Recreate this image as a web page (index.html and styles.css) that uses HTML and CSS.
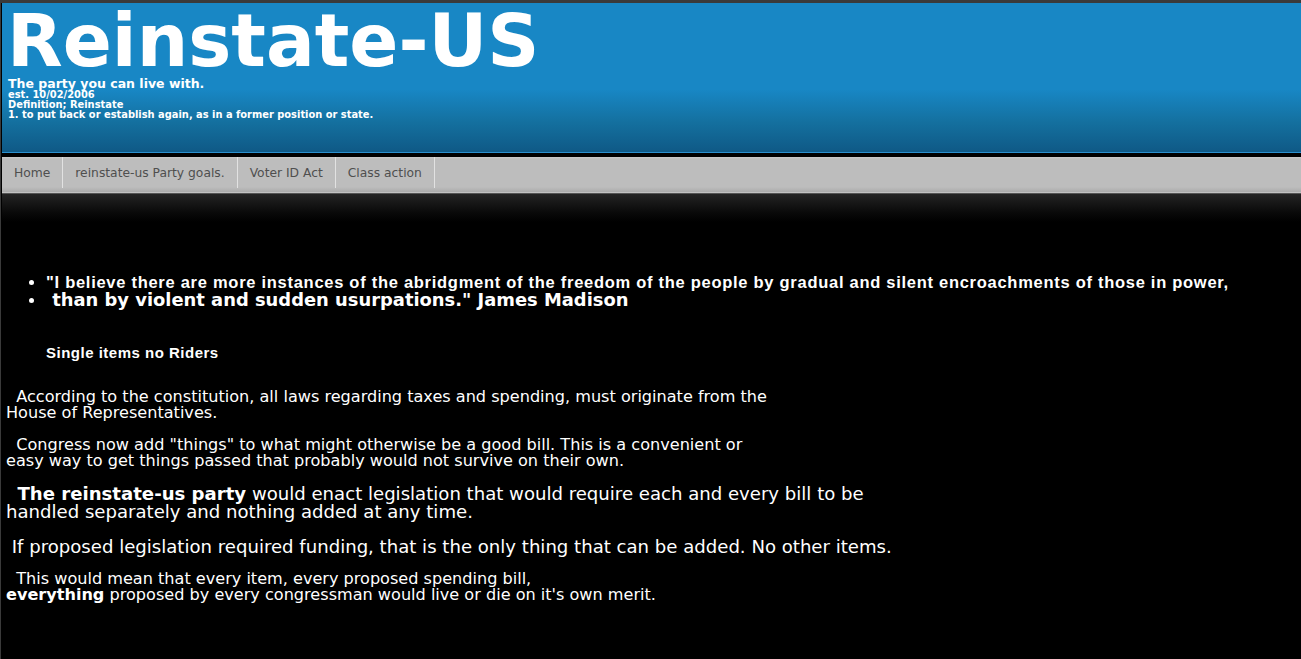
FILE: index.html
```html
<!DOCTYPE html>
<html lang="en">
<head>
<meta charset="utf-8">
<title>Reinstate-US</title>
<link rel="stylesheet" href="styles.css">
</head>
<body>
<div class="page">
  <header class="masthead">
    <h1 class="title">Reinstate-US</h1>
    <p class="tagline">The party you can live with.</p>
    <p class="small">est. 10/02/2006</p>
    <p class="small">Definition; Reinstate</p>
    <p class="small">1. to put back or establish again, as in a former position or state.</p>
  </header>
  <nav class="menu">
    <a class="menu-item" href="#">Home</a>
    <a class="menu-item" href="#">reinstate-us Party goals.</a>
    <a class="menu-item" href="#">Voter ID Act</a>
    <a class="menu-item" href="#">Class action</a>
  </nav>
  <main class="content">
    <ul class="quote">
      <li>"I believe there are more instances of the abridgment of the freedom of the people by gradual and silent encroachments of those in power,</li>
      <li><span class="quote-end">&nbsp;than by violent and sudden usurpations." James Madison</span></li>
    </ul>
    <h2 class="subhead">Single items no Riders</h2>
    <p class="para p1">&nbsp;&nbsp;According to the constitution, all laws regarding taxes and spending, must originate from the<br>House of Representatives.</p>
    <p class="para p2">&nbsp;&nbsp;Congress now add "things" to what might otherwise be a good bill. This is a convenient or<br>easy way to get things passed that probably would not survive on their own.</p>
    <p class="para big p3">&nbsp;&nbsp;<b>The reinstate-us party</b> would enact legislation that would require each and every bill to be<br>handled separately and nothing added at any time.</p>
    <p class="para big p4">&nbsp;If proposed legislation required funding, that is the only thing that can be added. No other items.</p>
    <p class="para p5">&nbsp;&nbsp;This would mean that every item, every proposed spending bill,<br><b>everything</b> proposed by every congressman would live or die on it's own merit.</p>
  </main>
</div>
</body>
</html>
```

FILE: styles.css
```css
html, body {
  margin: 0;
  padding: 0;
  background: #000;
}

.page {
  border-top: 3px solid #3a3a3a;
  border-left: 1px solid #3a3a3a;
  padding-left: 1px;
  min-height: 656px;
  background: #000;
}

.masthead {
  box-sizing: border-box;
  height: 150px;
  border-bottom: 1px solid #2a90cf;
  background: linear-gradient(to bottom, #1887c5 0, #1887c5 58%, #14709f 80%, #0f5986 100%);
  padding: 4px 0 0 6px;
  font-family: "DejaVu Sans", Verdana, sans-serif;
  color: #fff;
  font-weight: bold;
}

.title {
  margin: 0 0 0 -1px;
  font-size: 72.4px;
  line-height: 68px;
  font-weight: bold;
}

.tagline {
  margin: 2px 0 0 0;
  font-size: 12.5px;
  line-height: 13px;
}

.small {
  margin: 0;
  font-size: 9.9px;
  line-height: 10px;
}

.menu {
  margin-top: 4px;
  height: 36px;
  display: flex;
  background: linear-gradient(to bottom, #cbcbcb 0, #bdbdbd 2px, #bdbdbd 30px, #ababab 35px, #d8d8d8 36px);
  border-bottom: 1px solid #555;
  font-family: "DejaVu Sans", Verdana, sans-serif;
  font-size: 12.3px;
}

.menu-item {
  display: block;
  height: 31px;
  line-height: 32px;
  padding: 0 12px;
  border-right: 1px solid #e2e2e2;
  color: #4f4f4f;
  text-decoration: none;
}

.content {
  padding: 0 0 40px 4px;
  background: linear-gradient(to bottom, #242424 0, #0a0a0a 18px, #000 28px);
  color: #fff;
}

.quote {
  margin: 0;
  padding: 79px 0 0 40px;
  font-family: "Liberation Sans", Arial, sans-serif;
  font-weight: bold;
  font-size: 16.5px;
  letter-spacing: 0.72px;
  line-height: 18px;
}

.quote-end {
  font-family: "DejaVu Sans", Verdana, sans-serif;
  font-size: 17.9px;
  letter-spacing: 0;
}

.subhead {
  margin: 35px 0 0 0;
  padding-left: 40px;
  font-family: "Liberation Sans", Arial, sans-serif;
  font-size: 15px;
  letter-spacing: 0.5px;
  line-height: 18px;
  font-weight: bold;
}

.para {
  margin: 0;
  font-family: "DejaVu Sans", Verdana, sans-serif;
  font-size: 16.1px;
  line-height: 16px;
}

.para.big {
  font-size: 18.1px;
  line-height: 18px;
}

.p1 { margin-top: 27px; }
.p2 { margin-top: 16px; }
.p3 { margin-top: 16px; }
.p4 { margin-top: 17px; }
.p5 { margin-top: 15px; }
```
